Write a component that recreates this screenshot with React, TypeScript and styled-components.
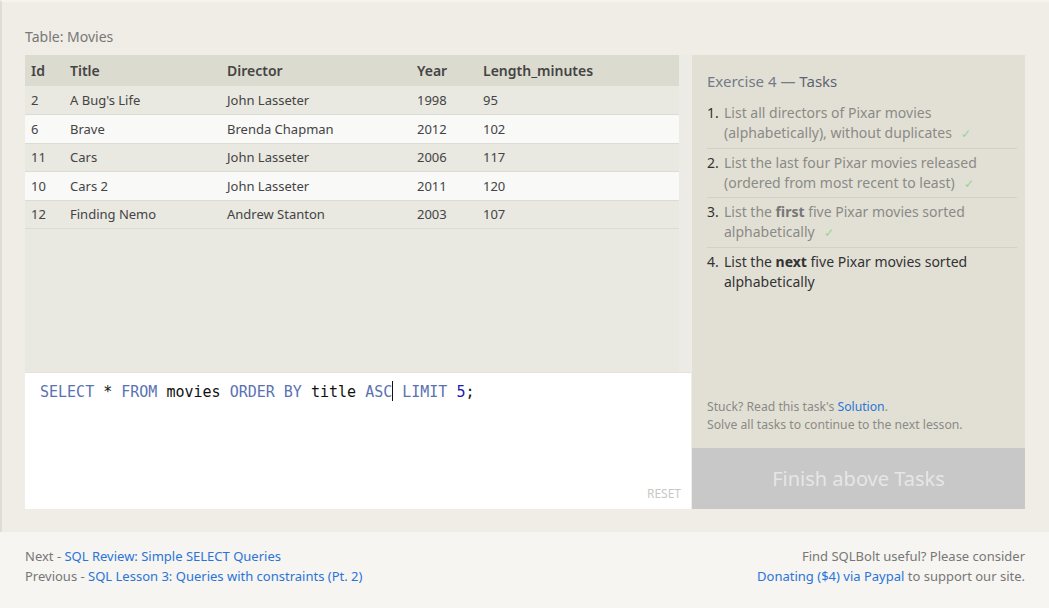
import React from "react";
import styled, { createGlobalStyle } from "styled-components";

const FONT = `"Noto Sans", "Liberation Sans", sans-serif`;

const GlobalStyle = createGlobalStyle`
  html, body {
    margin: 0;
    padding: 0;
    background: #f6f5f1;
  }
  body {
    font-family: ${FONT};
    color: #444;
  }
`;

interface Movie {
  id: number;
  title: string;
  director: string;
  year: number;
  length: number;
}

const movies: Movie[] = [
  { id: 2, title: "A Bug's Life", director: "John Lasseter", year: 1998, length: 95 },
  { id: 6, title: "Brave", director: "Brenda Chapman", year: 2012, length: 102 },
  { id: 11, title: "Cars", director: "John Lasseter", year: 2006, length: 117 },
  { id: 10, title: "Cars 2", director: "John Lasseter", year: 2011, length: 120 },
  { id: 12, title: "Finding Nemo", director: "Andrew Stanton", year: 2003, length: 107 },
];

interface Task {
  before: string;
  strong?: string;
  after: string;
  done: boolean;
}

const tasks: Task[] = [
  { before: "List all directors of Pixar movies (alphabetically), without duplicates", after: "", done: true },
  { before: "List the last four Pixar movies released (ordered from most recent to least)", after: "", done: true },
  { before: "List the ", strong: "first", after: " five Pixar movies sorted alphabetically", done: true },
  { before: "List the ", strong: "next", after: " five Pixar movies sorted alphabetically", done: false },
];

// column widths as seen in the reference (cell padding included)
const columns = [
  { label: "Id", width: 39 },
  { label: "Title", width: 157 },
  { label: "Director", width: 190 },
  { label: "Year", width: 66 },
  { label: "Length_minutes" },
];

const App = (): JSX.Element => {
  return (
    <>
      <GlobalStyle />
      <Main>
        <TableLabel>Table: Movies</TableLabel>
        <Workspace>
          <LeftColumn>
            <TableScroller>
              <TableArea>
                <MovieTable>
                  <colgroup>
                    {columns.map((c) => (
                      <col key={c.label} style={c.width ? { width: c.width } : undefined} />
                    ))}
                  </colgroup>
                  <thead>
                    <tr>
                      {columns.map((c) => (
                        <th key={c.label}>{c.label}</th>
                      ))}
                    </tr>
                  </thead>
                  <tbody>
                    {movies.map((m) => (
                      <tr key={m.id}>
                        <td>{m.id}</td>
                        <td>{m.title}</td>
                        <td>{m.director}</td>
                        <td>{m.year}</td>
                        <td>{m.length}</td>
                      </tr>
                    ))}
                  </tbody>
                </MovieTable>
              </TableArea>
              <ScrollTrack />
            </TableScroller>
            <Editor>
              <CodeLine>
                <Kw>SELECT</Kw> * <Kw>FROM</Kw> movies <Kw>ORDER BY</Kw> title <Kw>ASC</Kw>
                <Caret />
                {" "}
                <Kw>LIMIT</Kw> <Num>5</Num>;
              </CodeLine>
              <ResetButton>RESET</ResetButton>
            </Editor>
          </LeftColumn>
          <TaskPanel>
            <TaskBody>
              <TaskTitle>
                Exercise 4 — <span>Tasks</span>
              </TaskTitle>
              <TaskList>
                {tasks.map((t, i) => (
                  <TaskItem key={i} done={t.done}>
                    <TaskNumber>{i + 1}.</TaskNumber>
                    <TaskText done={t.done}>
                      {t.before}
                      {t.strong && <strong>{t.strong}</strong>}
                      {t.after}
                      {t.done && <Check>✓</Check>}
                    </TaskText>
                  </TaskItem>
                ))}
              </TaskList>
              <Hint>
                Stuck? Read this task's <Link href="#">Solution</Link>.
                <br />
                Solve all tasks to continue to the next lesson.
              </Hint>
            </TaskBody>
            <FinishButton>Finish above Tasks</FinishButton>
          </TaskPanel>
        </Workspace>
      </Main>
      <Footer>
        <FooterNav>
          <div>
            Next - <Link href="#">SQL Review: Simple SELECT Queries</Link>
          </div>
          <div>
            Previous - <Link href="#">SQL Lesson 3: Queries with constraints (Pt. 2)</Link>
          </div>
        </FooterNav>
        <FooterDonate>
          <div>Find SQLBolt useful? Please consider</div>
          <div>
            <Link href="#">Donating ($4) via Paypal</Link> to support our site.
          </div>
        </FooterDonate>
      </Footer>
    </>
  );
};

const Main = styled.section`
  background: #efede6;
  border-left: 2px solid #dfdcd5;
  border-top: 2px solid #f4f3ee;
  padding: 26px 24px 23px 23px;
`;

const TableLabel = styled.div`
  font-size: 14px;
  line-height: 18px;
  color: #777;
  margin-bottom: 9px;
`;

const Workspace = styled.div`
  display: flex;
  gap: 1px;
  height: 454px;
`;

const LeftColumn = styled.div`
  width: 666px;
  display: flex;
  flex-direction: column;
`;

const TableScroller = styled.div`
  display: flex;
  height: 317px;
`;

const TableArea = styled.div`
  flex: 1;
  background: #e9e8e1;
`;

const ScrollTrack = styled.div`
  width: 12px;
  background: #ecebe5;
`;

const MovieTable = styled.table`
  width: 100%;
  border-collapse: collapse;
  table-layout: fixed;

  & th,
  & td {
    box-sizing: border-box;
    padding: 0 6px;
    text-align: left;
  }

  & th {
    background: #dcdbd0;
    color: #444;
    font-size: 14px;
    font-weight: 600;
    height: 31px;
  }

  & td {
    font-size: 13px;
    color: #444;
    height: 28.5px;
    border-bottom: 1px solid #dcdbd4;
  }

  & tbody tr:nth-child(even) td {
    background: #f9f9f8;
  }
`;

const Editor = styled.div`
  flex: 1;
  background: #fff;
  border-top: 1px solid #e4e2dc;
  display: flex;
  flex-direction: column;
  justify-content: space-between;
  padding: 8px 10px 8px 15px;
`;

const CodeLine = styled.div`
  font-family: "DejaVu Sans Mono", "Liberation Mono", monospace;
  font-size: 15px;
  line-height: 19px;
  color: #111;
  white-space: pre;
`;

const Kw = styled.span`
  color: #5a72b3;
`;

const Num = styled.span`
  color: #1d1ab0;
`;

const Caret = styled.span`
  display: inline-block;
  width: 1px;
  height: 20px;
  background: #111;
  vertical-align: -4px;
`;

const ResetButton = styled.div`
  align-self: flex-end;
  font-size: 12px;
  color: #c8c8c8;
  line-height: 14px;
`;

const TaskPanel = styled.aside`
  flex: 1;
  background: #e2e0d5;
  display: flex;
  flex-direction: column;
`;

const TaskBody = styled.div`
  flex: 1;
  display: flex;
  flex-direction: column;
  padding: 16px 8px 14px 15px;
`;

const TaskTitle = styled.div`
  font-size: 15px;
  line-height: 20px;
  color: #727a88;

  & span {
    color: #5c6474;
  }
`;

const TaskList = styled.ol`
  list-style: none;
  margin: 12px 0 0;
  padding: 0;
  flex: 1;
`;

const TaskItem = styled.li<{ done: boolean }>`
  display: flex;
  font-size: 14px;
  line-height: 20px;
  padding: 4px 0 3.5px;
  border-bottom: 1px solid ${(p) => (p.done ? "#d3d1c6" : "transparent")};

  &:first-child {
    padding-top: 0;
  }
`;

const TaskNumber = styled.span`
  width: 17px;
  flex-shrink: 0;
  color: #333;
`;

const TaskText = styled.span<{ done: boolean }>`
  color: ${(p) => (p.done ? "#8a8a86" : "#333")};

  & strong {
    font-weight: 700;
    color: ${(p) => (p.done ? "#777" : "#333")};
  }
`;

const Check = styled.span`
  color: #98d298;
  font-size: 12px;
  margin-left: 9px;
`;

const Hint = styled.div`
  font-size: 12.2px;
  line-height: 18px;
  color: #8a8a86;
`;

const Link = styled.a`
  color: #2a74d8;
  text-decoration: none;
`;

const FinishButton = styled.div`
  height: 61px;
  background: #c8c8c8;
  color: #e6e6e6;
  font-size: 20px;
  display: flex;
  align-items: center;
  justify-content: center;
`;

const Footer = styled.footer`
  display: flex;
  justify-content: space-between;
  padding: 14px 24px 12px 25px;
  font-size: 13px;
  line-height: 20px;
  color: #777;
`;

const FooterNav = styled.div``;

const FooterDonate = styled.div`
  text-align: right;
`;

export default App;
